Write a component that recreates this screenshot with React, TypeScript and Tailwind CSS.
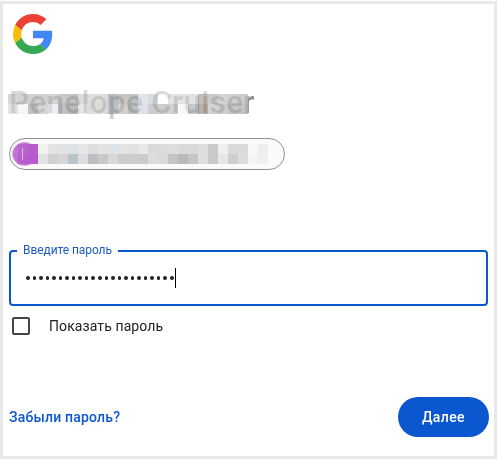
const TITLE_TOP = ['#cccccc', '#c6c7c7', '#c2c3c3', '#c4c4c4', '#c8c9ca', '#b9babb', '#b2b3b3', '#d2d2d3', '#d6d6d5', '#d6d4d0', '#a6abb2', '#bab6b0', '#afb0b0', '#d8dde6', '#d2d3d4', '#ffffff', '#dcdcdc', '#dedbd8', '#d9dadd', '#b6aaa0', '#b9babc', '#c9c9ca', '#c2c2c2', '#bdbfc0'];
const TITLE_BOTTOM = ['#dcdcdc', '#f6f6f6', '#b0b1b1', '#cccccc', '#e8ebf2', '#b0b1b3', '#a8a9aa', '#e0e1e2', '#d4d4d2', '#d4d2ce', '#a8adb3', '#c6c3bf', '#adaeae', '#d4dae3', '#c0c0c0', '#c0c0bf', '#c6c6c6', '#f8f4f5', '#b5bac0', '#a89c94', '#c8c8cc', '#bebebf', '#b5b5b5', '#b4b4b5'];
const PILL_TOP = ['#b965ce', '#b75cca', '#f2f1f2', '#e3e3e3', '#e1e1e2', '#dce3e7', '#e5e5e5', '#dddedf', '#e5e3e2', '#dce4e9', '#e4e4e4', '#e1e1e1', '#e8e8e8', '#dadada', '#dbdbdb', '#dddddd', '#dadada', '#dadada', '#dedede', '#c9c9ca', '#f0eeee', '#dadada', '#dadada', '#f7f7fa', '#eeeeee'];
const PILL_BOTTOM = ['#b75ccb', '#b65acb', '#e3e2e3', '#d0d0d0', '#d6d6d6', '#bcc4cb', '#dddddd', '#bcbfc1', '#c9c9ca', '#d8d8d8', '#cccccc', '#cdcdcd', '#cbcbcb', '#dddddd', '#d9d9d9', '#c4c4c4', '#bababb', '#c5c5c5', '#dedede', '#c9c9ca', '#e6e6e6', '#cecece', '#dcdcdc', '#f4f4f4', '#f0f0f1'];

function Mosaic({ rows }: { rows: string[][] }) {
  return (
    <div>
      {rows.map((row, r) => (
        <div key={r} className="flex">
          {row.map((color, i) => (
            <div key={i} className="h-[10px] w-[10px] shrink-0" style={{ backgroundColor: color }} />
          ))}
        </div>
      ))}
    </div>
  );
}

function GoogleLogo() {
  return (
    <svg className="block h-10 w-10" viewBox="0 0 48 48" aria-label="Google">
      <path fill="#EA4335" d="M24 9.5c3.54 0 6.71 1.22 9.21 3.6l6.85-6.85C35.9 2.38 30.47 0 24 0 14.62 0 6.51 5.38 2.56 13.22l7.98 6.19C12.43 13.72 17.74 9.5 24 9.5z" />
      <path fill="#4285F4" d="M46.98 24.55c0-1.57-.15-3.09-.38-4.55H24v9.02h12.94c-.58 2.96-2.26 5.48-4.78 7.18l7.73 6c4.51-4.18 7.09-10.36 7.09-17.65z" />
      <path fill="#FBBC05" d="M10.53 28.59A14.5 14.5 0 0 1 9.77 24c0-1.6.27-3.14.76-4.59l-7.98-6.19A23.99 23.99 0 0 0 0 24c0 3.88.92 7.54 2.56 10.78z" />
      <path fill="#34A853" d="M24 48c6.48 0 11.93-2.13 15.89-5.81l-7.73-6c-2.15 1.45-4.92 2.3-8.16 2.3-6.26 0-11.57-4.22-13.47-9.91l-7.98 6.19C6.51 42.62 14.62 48 24 48z" />
    </svg>
  );
}

export default function App() {
  return (
    <div className="h-[459px] w-[497px] bg-white pt-px font-[Roboto,sans-serif] text-[#202124]">
      <main className="flex h-[458px] flex-col border-[3px] border-[#e8e8e8] pl-[6px] pr-[5px]">
        <header className="pl-1 pt-[10px]">
          <GoogleLogo />
        </header>

        <div className="relative mt-[30px] h-[40px]">
          <h1 className="whitespace-nowrap text-[31.5px] font-medium leading-[38px] tracking-[0.3px] text-[#8f9193]">Penelope Cruiser</h1>
          <div className="absolute left-[-1px] top-0 h-[10px] w-[260px] bg-white/65" />
          <div className="absolute left-[-1px] top-[30px] h-[10px] w-[260px] bg-[#e8f2ff]/60 mix-blend-screen" />
          <div className="absolute left-[-1px] top-[10px] opacity-[0.78]">
            <Mosaic rows={[TITLE_TOP, TITLE_BOTTOM]} />
          </div>
        </div>

        <div className="mt-[14px] flex h-8 w-[276px] items-center rounded-full border border-[#8f8f8f] bg-[#fafafa] pl-[2px]">
          <div className="relative h-[24px] w-[25px] shrink-0 rounded-full border border-[#dda9e8] bg-[#c072d2]">
            <div className="absolute left-[5px] top-px">
              <Mosaic rows={[PILL_TOP, PILL_BOTTOM]} />
            </div>
            <span className="absolute left-[9px] top-[5px] h-3 w-px bg-[#dfb3ea]" />
          </div>
        </div>

        <fieldset className="mt-[75px] h-[61px] w-[479px] rounded border-2 border-[#0b57d0] pl-[6px]">
          <legend className="h-3 whitespace-nowrap pl-[6px] pr-[6px] text-xs leading-[10px] text-[#1b5dbf]">
            <span className="tracking-[-0.07px]">Введите пароль</span>
          </legend>
          <div className="mt-[11px] flex h-5 items-center pl-[9px]">
            <div className="flex gap-[3.05px]">
              {Array.from({ length: 23 }, (_, i) => (
                <span key={i} className="h-[3.5px] w-[3.5px] rounded-full bg-[#202124]" />
              ))}
            </div>
            <span className="ml-px h-5 w-px bg-black" />
          </div>
        </fieldset>

        <label className="mt-[11px] flex h-[18px] items-center gap-[19px] pl-[3px]">
          <span className="h-[18px] w-[18px] rounded-xs border-2 border-[#444746]" />
          <span className="text-sm tracking-[0.1px]">Показать пароль</span>
        </label>

        <footer className="mt-[62px] flex h-10 items-center justify-between">
          <a className="text-sm font-medium tracking-[0.2px] text-[#0b57d0]">Забыли пароль?</a>
          <button className="h-10 w-[91px] rounded-full bg-[#0b57d0] text-sm font-medium tracking-[0.4px] text-white">Далее</button>
        </footer>
      </main>
    </div>
  );
}
